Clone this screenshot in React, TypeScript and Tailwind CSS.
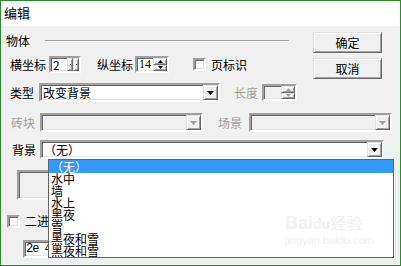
import React from "react"

const sunken =
  "border-2 border-t-[#a0a0a0] border-l-[#a0a0a0] border-b-white border-r-white shadow-[inset_1px_1px_0_#696969,inset_-1px_-1px_0_#e3e3e3]"
const raised =
  "border border-t-[#e3e3e3] border-l-[#e3e3e3] border-b-[#696969] border-r-[#696969] shadow-[inset_1px_1px_0_#ffffff,inset_-1px_-1px_0_#a0a0a0] bg-[#f0f0f0]"

function Arrow({ up = false, color = "#000", w = 7 }: { up?: boolean; color?: string; w?: number }) {
  const h = Math.ceil(w / 2)
  return (
    <svg width={w} height={h} className="block">
      <path d={up ? `M0 ${h}h${w}L${w / 2} 0z` : `M0 0h${w}L${w / 2} ${h}z`} fill={color} />
    </svg>
  )
}

function Combo({
  w,
  text,
  disabled = false,
}: {
  w: string
  text?: string
  disabled?: boolean
}) {
  return (
    <div className={`${w} h-[19px] ${sunken} ${disabled ? "bg-[#f0f0f0]" : "bg-white"} flex items-stretch`}>
      <div className="flex-1 pl-[2px] text-[12px] leading-[15px] whitespace-nowrap overflow-hidden">{text}</div>
      <div className={`w-[15px] ${raised} flex items-center justify-center`}>
        <Arrow color={disabled ? "#a0a0a0" : "#000"} />
      </div>
    </div>
  )
}

function Spinner({
  w,
  value,
  disabled = false,
  narrow = false,
  serif = false,
}: {
  w: string
  value?: string
  disabled?: boolean
  narrow?: boolean
  serif?: boolean
}) {
  return (
    <div className={`${w} h-[17px] ${sunken} ${disabled ? "bg-[#f0f0f0]" : "bg-white"} flex items-stretch`}>
      <div
        className={`flex-1 pl-[2px] text-[12px] leading-[13px] ${serif ? "font-['Liberation_Serif']" : ""}`}
      >
        {value}
      </div>
      {narrow ? (
        <div className="flex">
          <div className={`w-[6px] ${raised} flex items-center justify-center`}>
            <div className="w-[1px] h-[1px] bg-black" />
          </div>
          <div className={`w-[6px] ${raised} flex items-center justify-center`}>
            <div className="w-[1px] h-[1px] bg-black" />
          </div>
        </div>
      ) : (
        <div className="w-[14px] flex flex-col">
          <div className={`flex-1 ${raised} flex items-center justify-center`}>
            <Arrow up w={5} color={disabled ? "#a0a0a0" : "#000"} />
          </div>
          <div className={`flex-1 ${raised} flex items-center justify-center`}>
            <Arrow w={5} color={disabled ? "#a0a0a0" : "#000"} />
          </div>
        </div>
      )}
    </div>
  )
}

function Check() {
  return <div className={`w-[13px] h-[13px] ${sunken} bg-white`} />
}

// list rows overlap a little in the original dialog, keep it that way
const items = ["水中", "墙", "水上", "黑夜", "雪", "黑夜和雪", "黑夜和雪"]

export default function App() {
  return (
    <div className="w-[401px] h-[266px] border border-[#23902a] bg-[#f0f0f0] flex flex-col font-['Noto_Sans_CJK_SC',sans-serif] text-black overflow-hidden">
      <div className="h-[25px] bg-white pl-[3px] pt-[4px] text-[13px] leading-[16px]">编辑</div>

      <div className="relative flex-1 flex flex-col">
        {/* top: group header + coords, buttons on right */}
        <div className="flex h-[53px]">
          <div className="w-[312px]">
            <div className="flex items-center h-[14px] mt-[8px] pl-[5px] pr-[24px] text-[12px]">
              <span>物体</span>
              <div className="flex-1 ml-[15px] border-t border-t-[#a0a0a0] border-b border-b-white" />
            </div>
            <div className="flex items-center h-[17px] mt-[8px] pl-[9px] text-[12px]">
              <span>横坐标</span>
              <Spinner w="w-[32px] ml-[3px]" value="2" narrow />
              <span className="ml-[16px]">纵坐标</span>
              <Spinner w="w-[34px] ml-[2px]" value="14" serif />
              <div className="ml-[24px]">
                <Check />
              </div>
              <span className="ml-[5px]">页标识</span>
            </div>
          </div>
          <div className="flex flex-col w-[69px] text-[12px]">
            <div className={`mt-[6px] h-[21px] ${raised} flex items-center justify-center`}>确定</div>
            <div className={`mt-[5px] h-[21px] ${raised} flex items-center justify-center`}>取消</div>
          </div>
        </div>

        {/* type row */}
        <div className="flex items-center mt-[4px] pl-[9px] text-[12px]">
          <span>类型</span>
          <Combo w="w-[181px] ml-[5px]" text="改变背景" />
          <span className="ml-[14px] text-[#a0a0a0]">长度</span>
          <Spinner w="w-[35px] ml-[4px]" disabled />
        </div>

        {/* brick / scene */}
        <div className="flex items-center mt-[11px] pl-[10px] text-[12px]">
          <span className="text-[#a0a0a0]">砖块</span>
          <Combo w="w-[163px] ml-[5px]" disabled />
          <span className="ml-[15px] text-[#a0a0a0]">场景</span>
          <Combo w="w-[143px] ml-[7px]" disabled />
        </div>

        {/* background */}
        <div className="flex items-center mt-[8px] pl-[11px] text-[12px]">
          <span>背景</span>
          <Combo w="w-[344px] ml-[4px]" text="（无）" />
        </div>

        {/* lower controls, mostly hidden */}
        <div className={`ml-[16px] mt-[11px] w-[60px] h-[30px] ${sunken} bg-[#f0f0f0]`} />
        <div className="flex items-center ml-[6px] mt-[12px] text-[12px]">
          <Check />
          <span className="ml-[5px]">二进制</span>
        </div>
        <div className={`ml-[22px] mt-[10px] w-[80px] h-[18px] ${sunken} bg-white pl-[1px] text-[12px] leading-[14px] tracking-[-1px] font-['Liberation_Mono']`}>
          2e 4
        </div>

        {/* open dropdown list */}
        <div className="absolute left-[47px] top-[133px] w-[346px] h-[99px] bg-white border border-[#646464] text-[12px]">
          <div className="h-[13px] bg-[#3399ff] text-white pl-[2px] leading-[13px]">（无）</div>
          {items.map((t, i) => (
            <div key={i} className="h-[12px] pl-[2px] leading-[12px] whitespace-nowrap">
              {t}
            </div>
          ))}
          <div className="absolute left-[236px] top-[52px] text-[#f2f2f2] font-['Liberation_Sans'] select-none">
            <div className="text-[18px] leading-[20px] font-bold">
              Bai<span className="text-[14px]">du</span>
              <span className="font-['Noto_Sans_CJK_SC'] text-[16px] font-normal">经验</span>
            </div>
            <div className="text-[11px] leading-[12px]">jingyan.baidu.com</div>
          </div>
        </div>
      </div>
    </div>
  )
}
